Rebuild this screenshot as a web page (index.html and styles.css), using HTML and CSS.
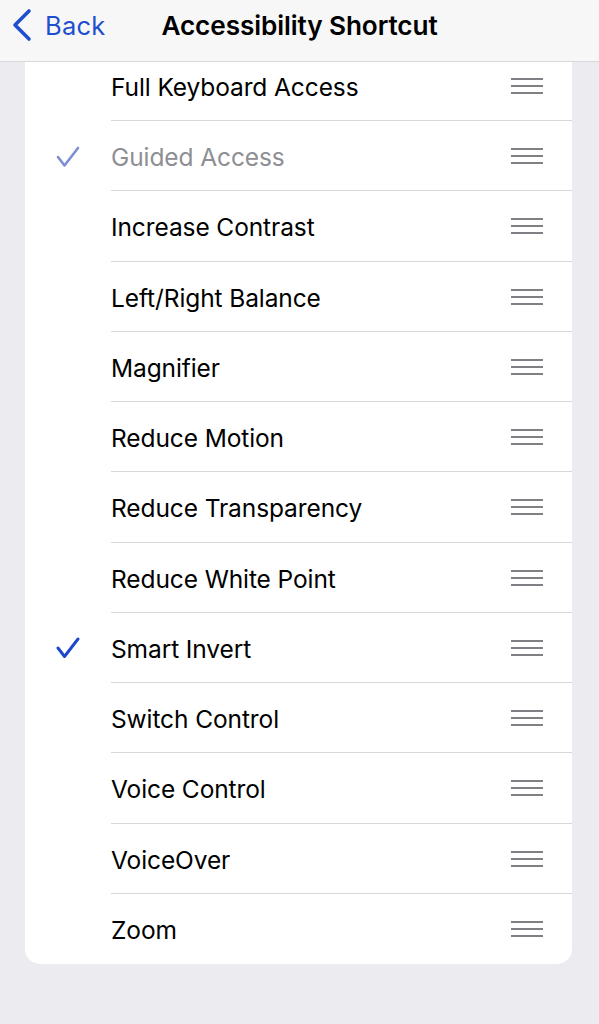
FILE: index.html
```html
<!DOCTYPE html>
<html>
<head>
<meta charset="utf-8">
<link rel="stylesheet" href="styles.css">
</head>
<body>
<header class="navbar">
  <div class="back">
    <svg class="chev" width="22" height="34" viewBox="0 0 22 34"><polyline points="18,3 4,17 18,31" fill="none" stroke="#1f4fcf" stroke-width="3.6" stroke-linecap="round" stroke-linejoin="round"/></svg>
    <span class="back-label">Back</span>
  </div>
  <h1 class="title">Accessibility Shortcut</h1>
</header>
<main class="content">
  <ul class="card">
    <li class="row"><span class="check"></span><span class="label">Full Keyboard Access</span><span class="handle"><i></i><i></i><i></i></span></li>
    <li class="row dim"><span class="check"><svg width="24" height="22" viewBox="0 0 24 22"><polyline points="2,11 8.5,19.5 22,2" fill="none" stroke="#7e8fd3" stroke-width="2.6" stroke-linecap="round" stroke-linejoin="round"/></svg></span><span class="label">Guided Access</span><span class="handle"><i></i><i></i><i></i></span></li>
    <li class="row"><span class="check"></span><span class="label">Increase Contrast</span><span class="handle"><i></i><i></i><i></i></span></li>
    <li class="row"><span class="check"></span><span class="label">Left/Right Balance</span><span class="handle"><i></i><i></i><i></i></span></li>
    <li class="row"><span class="check"></span><span class="label">Magnifier</span><span class="handle"><i></i><i></i><i></i></span></li>
    <li class="row"><span class="check"></span><span class="label">Reduce Motion</span><span class="handle"><i></i><i></i><i></i></span></li>
    <li class="row"><span class="check"></span><span class="label">Reduce Transparency</span><span class="handle"><i></i><i></i><i></i></span></li>
    <li class="row"><span class="check"></span><span class="label">Reduce White Point</span><span class="handle"><i></i><i></i><i></i></span></li>
    <li class="row"><span class="check"><svg width="24" height="22" viewBox="0 0 24 22"><polyline points="2,11 8.5,19.5 22,2" fill="none" stroke="#1a47cc" stroke-width="2.9" stroke-linecap="round" stroke-linejoin="round"/></svg></span><span class="label">Smart Invert</span><span class="handle"><i></i><i></i><i></i></span></li>
    <li class="row"><span class="check"></span><span class="label">Switch Control</span><span class="handle"><i></i><i></i><i></i></span></li>
    <li class="row"><span class="check"></span><span class="label">Voice Control</span><span class="handle"><i></i><i></i><i></i></span></li>
    <li class="row"><span class="check"></span><span class="label">VoiceOver</span><span class="handle"><i></i><i></i><i></i></span></li>
    <li class="row"><span class="check"></span><span class="label">Zoom</span><span class="handle"><i></i><i></i><i></i></span></li>
  </ul>
</main>
</body>
</html>
```

FILE: styles.css
```css
* { box-sizing: border-box; }
html, body { margin: 0; padding: 0; }
body {
  width: 599px;
  height: 1024px;
  overflow: hidden;
  background: #ebebf0;
  font-family: Inter, "Noto Sans", "Liberation Sans", sans-serif;
  color: #000;
}
.navbar {
  height: 62px;
  background: #f7f7f7;
  border-bottom: 1px solid #d9d9d9;
  display: flex;
  align-items: center;
  justify-content: center;
  position: relative;
}
.back {
  position: absolute;
  left: 11px;
  top: 8px;
  display: flex;
  align-items: center;
  gap: 12px;
  color: #1f4fcf;
}
.back-label {
  font-size: 25.5px;
  letter-spacing: 0.2px;
}
.title {
  margin: 0;
  font-size: 26.2px;
  font-weight: 600;
  letter-spacing: -0.1px;
  margin-top: -10px;
}
.content {
  overflow: hidden;
  height: 962px;
}
.card {
  list-style: none;
  margin: -11.25px 27px 0 25px;
  padding: 0;
  background: #fff;
  border-radius: 0 0 15px 15px;
}
.row {
  height: 70.25px;
  display: flex;
  align-items: center;
  position: relative;
}
.row::after {
  content: "";
  position: absolute;
  left: 86px;
  right: 0;
  bottom: 0;
  height: 1px;
  background: #d8d8dc;
}
.row:last-child::after { display: none; }
.check {
  width: 86px;
  display: flex;
  justify-content: center;
  padding-top: 1px;
}
.check svg { margin-left: 0; }
.label {
  flex: 1;
  font-size: 24.5px;
  letter-spacing: -0.1px;
  padding-top: 2px;
}
.dim .label { color: #8e8e93; }
.handle {
  width: 32px;
  margin-right: 29px;
  display: flex;
  flex-direction: column;
  gap: 5px;
}
.handle i {
  display: block;
  height: 2px;
  background: #808084;
}
```
